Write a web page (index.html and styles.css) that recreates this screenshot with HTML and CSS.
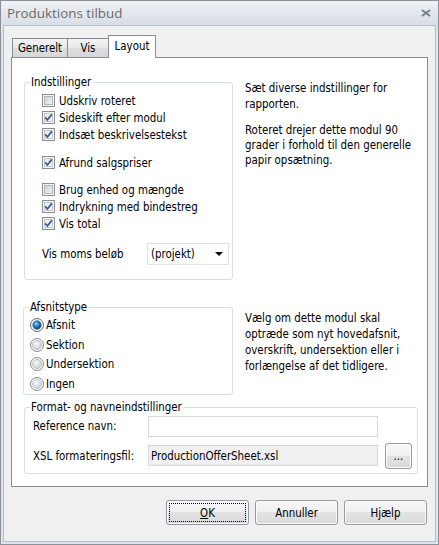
FILE: index.html
```html
<!DOCTYPE html>
<html lang="da">
  <head>
    <meta charset="UTF-8" />
    <title>Produktions tilbud</title>
    <link rel="stylesheet" href="styles.css">
  </head>
  <body>
    <!-- shared glyphs for checkboxes and radio buttons -->
    <svg class="defs" aria-hidden="true">
      <defs>
        <linearGradient id="box-fill" x1="0" y1="0" x2="1" y2="1">
          <stop offset="0" stop-color="#c9cdd3" />
          <stop offset="1" stop-color="#f6f7f8" />
        </linearGradient>
        <linearGradient id="box-fill-on" x1="0" y1="0" x2="1" y2="1">
          <stop offset="0" stop-color="#e4e7ea" />
          <stop offset="1" stop-color="#fbfbfb" />
        </linearGradient>
        <radialGradient id="radio-fill" cx="0.4" cy="0.35" r="0.7">
          <stop offset="0" stop-color="#fafafa" />
          <stop offset="1" stop-color="#c8ccd1" />
        </radialGradient>
        <radialGradient id="radio-dot" cx="0.4" cy="0.35" r="0.65">
          <stop offset="0" stop-color="#9be0ff" />
          <stop offset="0.45" stop-color="#2f86cf" />
          <stop offset="1" stop-color="#0c3f7a" />
        </radialGradient>
        <symbol id="cb-off" viewBox="0 0 13 13">
          <rect x="0.5" y="0.5" width="12" height="12" fill="#f4f4f4" stroke="#8e8f8f" />
          <rect x="2.5" y="2.5" width="8" height="8" fill="url(#box-fill)" stroke="#b0b5bb" />
        </symbol>
        <symbol id="cb-on" viewBox="0 0 13 13">
          <rect x="0.5" y="0.5" width="12" height="12" fill="#f4f4f4" stroke="#8e8f8f" />
          <rect x="2.5" y="2.5" width="8" height="8" fill="url(#box-fill-on)" stroke="#c3c8ce" />
          <path d="M3.2 6.4 L5.4 9 L9.8 3.4" fill="none" stroke="#3d5592" stroke-width="1.7" />
        </symbol>
        <symbol id="radio-off" viewBox="0 0 14 14">
          <circle cx="7" cy="7" r="6.5" fill="#f4f4f4" stroke="#8e8f8f" />
          <circle cx="7" cy="7" r="4.5" fill="url(#radio-fill)" stroke="#b8bcc2" stroke-width="0.8" />
        </symbol>
        <symbol id="radio-on" viewBox="0 0 14 14">
          <circle cx="7" cy="7" r="6.5" fill="#f4f4f4" stroke="#5f6f84" />
          <circle cx="7" cy="7" r="4.2" fill="url(#radio-dot)" stroke="#1b4d86" stroke-width="0.6" />
        </symbol>
      </defs>
    </svg>

    <div class="window">
      <div class="titlebar">
        <span class="title">Produktions tilbud</span>
        <svg class="close" width="10" height="8" viewBox="0 0 10 8">
          <path d="M1 1 L9 7 M9 1 L1 7" stroke="#74808f" stroke-width="2" />
        </svg>
      </div>

      <div class="client">
        <div class="tabs">
          <div class="tab tab-general">Generelt</div>
          <div class="tab tab-view">Vis</div>
          <div class="tab tab-layout active">Layout</div>
        </div>

        <div class="tabpage">
          <div class="section">
            <fieldset class="group settings">
              <legend>Indstillinger</legend>
              <div class="group-body">
                <label class="check"><svg class="cb"><use href="#cb-off" /></svg>Udskriv roteret</label>
                <label class="check"><svg class="cb"><use href="#cb-on" /></svg>Sideskift efter modul</label>
                <label class="check"><svg class="cb"><use href="#cb-on" /></svg>Indsæt beskrivelsestekst</label>
                <label class="check gap-11"><svg class="cb"><use href="#cb-on" /></svg>Afrund salgspriser</label>
                <label class="check gap-10"><svg class="cb"><use href="#cb-off" /></svg>Brug enhed og mængde</label>
                <label class="check"><svg class="cb"><use href="#cb-on" /></svg>Indrykning med bindestreg</label>
                <label class="check"><svg class="cb"><use href="#cb-on" /></svg>Vis total</label>
                <div class="vat-row">
                  <span class="vat-label">Vis moms beløb</span>
                  <div class="select">(projekt)<span class="arrow"></span></div>
                </div>
              </div>
            </fieldset>
            <div class="help help-settings">
              <p>Sæt diverse indstillinger for<br>rapporten.</p>
              <p class="tight">Roteret drejer dette modul 90<br>grader i forhold til den generelle<br>papir opsætning.</p>
            </div>
          </div>

          <div class="section section-type">
            <fieldset class="group type">
              <legend>Afsnitstype</legend>
              <div class="group-body">
                <label class="radio"><svg class="rb"><use href="#radio-on" /></svg>Afsnit</label>
                <label class="radio"><svg class="rb"><use href="#radio-off" /></svg>Sektion</label>
                <label class="radio"><svg class="rb"><use href="#radio-off" /></svg>Undersektion</label>
                <label class="radio"><svg class="rb"><use href="#radio-off" /></svg>Ingen</label>
              </div>
            </fieldset>
            <div class="help help-type">
              <p>Vælg om dette modul skal<br>optræde som nyt hovedafsnit,<br>overskrift, undersektion eller i<br>forlængelse af det tidligere.</p>
            </div>
          </div>

          <fieldset class="group format">
            <legend>Format- og navneindstillinger</legend>
            <div class="group-body">
              <div class="field-row">
                <span class="field-label">Reference navn:</span>
                <div class="textbox"></div>
              </div>
              <div class="field-row file-row">
                <span class="field-label">XSL formateringsfil:</span>
                <div class="textbox readonly">ProductionOfferSheet.xsl</div>
                <button class="btn browse">...</button>
              </div>
            </div>
          </fieldset>
        </div>

        <div class="buttons">
          <button class="btn default"><u>O</u>K</button>
          <button class="btn">Annuller</button>
          <button class="btn">Hjælp</button>
        </div>
      </div>
    </div>
  </body>
</html>
```

FILE: styles.css
```css
body {
  margin: 0;
  font-family: "DejaVu Sans Condensed", "DejaVu Sans", sans-serif;
  font-size: 11.4px;
  color: #000;
  background: #fff;
}
.defs {
  position: absolute;
  width: 0;
  height: 0;
}
p {
  margin: 0;
}

/* window chrome */
.window {
  width: 439px;
  height: 545px;
  box-sizing: border-box;
  border: 1px solid #8a9199;
  background: #dfe4ea;
  display: flex;
  flex-direction: column;
}
.titlebar {
  height: 24px;
  flex: none;
  display: flex;
  align-items: center;
  justify-content: space-between;
  padding: 0 7px 0 6px;
  background: linear-gradient(#eff2f6, #d8dee6);
}
.title {
  font-family: "Open Sans", sans-serif;
  font-size: 13.4px;
  color: #6a6a6a;
}
.client {
  flex: 1;
  margin: 0 2px 2px;
  border: 1px solid #b7bdc5;
  background: #f0f0f0;
  padding: 9px 6px 0 7px;
}

/* tabs */
.tabs {
  display: flex;
  align-items: flex-end;
  height: 22px;
  padding-left: 1px;
}
.tab {
  box-sizing: border-box;
  height: 19px;
  border: 1px solid #898c95;
  border-bottom: none;
  background: linear-gradient(#f3f3f3, #e8e8e8 50%, #dedede 50%, #d7d7d7);
  display: flex;
  align-items: center;
  justify-content: center;
}
.tab-general {
  width: 56px;
}
.tab-view {
  width: 42px;
  margin-left: -1px;
}
.tab-layout {
  width: 48px;
  margin-left: -1px;
}
.tab.active {
  height: 23px;
  margin-bottom: -1px;
  padding-bottom: 3px;
  background: #fff;
  position: relative;
}
.tabpage {
  width: 417px;
  height: 430px;
  box-sizing: border-box;
  border: 1px solid #898c95;
  background: #fff;
  padding: 18px 9px 0 12px;
}

/* group boxes */
.group {
  margin: 0;
  padding: 0;
  border: 1px solid #d5dfe5;
  border-radius: 3px;
  min-width: 0;
}
.group legend {
  margin-left: 5px;
  padding: 0 1px;
  line-height: 13px;
}
.section {
  display: flex;
  align-items: flex-start;
}
.settings {
  width: 209px;
  box-sizing: border-box;
}
.settings .group-body {
  padding: 3px 0 14px 17px;
}
.check {
  display: flex;
  align-items: center;
  gap: 4px;
  height: 17px;
}
.cb {
  width: 13px;
  height: 13px;
  flex: none;
}
.gap-11 {
  margin-top: 11px;
}
.gap-10 {
  margin-top: 10px;
}
.vat-row {
  display: flex;
  align-items: center;
  margin-top: 11px;
}
.vat-label {
  width: 105px;
}
.select {
  width: 82px;
  height: 22px;
  box-sizing: border-box;
  border: 1px solid #e2e2e2;
  padding-left: 3px;
  display: flex;
  align-items: center;
  justify-content: space-between;
}
.arrow {
  width: 0;
  height: 0;
  margin-right: 5px;
  border-left: 4px solid transparent;
  border-right: 4px solid transparent;
  border-top: 4px solid #000;
}
.help {
  margin-left: 12px;
  line-height: 16px;
}
.help-settings {
  margin-top: 4px;
}
.help .tight {
  margin-top: 11px;
  line-height: 15px;
}
.section-type {
  margin-top: 21px;
}
.type {
  width: 210px;
  box-sizing: border-box;
  margin-left: -1px;
}
.type .group-body {
  padding: 1px 0 0 6px;
}
.radio {
  display: flex;
  align-items: center;
  gap: 2px;
  height: 19.7px;
}
.rb {
  width: 14px;
  height: 14px;
  flex: none;
}
.help-type {
  margin-top: 9px;
}
.format {
  width: 394px;
  box-sizing: border-box;
  margin-top: 6px;
}
.format .group-body {
  padding: 2px 5px 4px 8px;
}
.field-row {
  display: flex;
  align-items: center;
}
.file-row {
  margin-top: 6px;
}
.field-label {
  width: 115px;
  flex: none;
}
.textbox {
  width: 230px;
  height: 21px;
  box-sizing: border-box;
  border: 1px solid #d6d8dc;
  background: #fff;
  padding-left: 2px;
  display: flex;
  align-items: center;
}
.textbox.readonly {
  background: #f0f0f0;
}

/* push buttons */
.btn {
  font-family: inherit;
  font-size: 11.4px;
  color: #000;
  box-sizing: border-box;
  height: 25px;
  width: 83px;
  padding: 0;
  border: 1px solid #9a9a9a;
  border-radius: 3px;
  background: linear-gradient(#f7f7f7, #efefef 50%, #e3e3e3 50%, #d9d9d9);
  box-shadow: inset 0 0 0 1px #fbfbfb;
}
.btn.default {
  border-color: #8c98a6;
  outline: 1px dotted #000;
  outline-offset: -4px;
}
.browse {
  width: 27px;
  height: 26px;
  margin-left: 7px;
}
.buttons {
  display: flex;
  justify-content: flex-end;
  gap: 6px;
  margin-top: 13px;
  padding-right: 2px;
}
```
